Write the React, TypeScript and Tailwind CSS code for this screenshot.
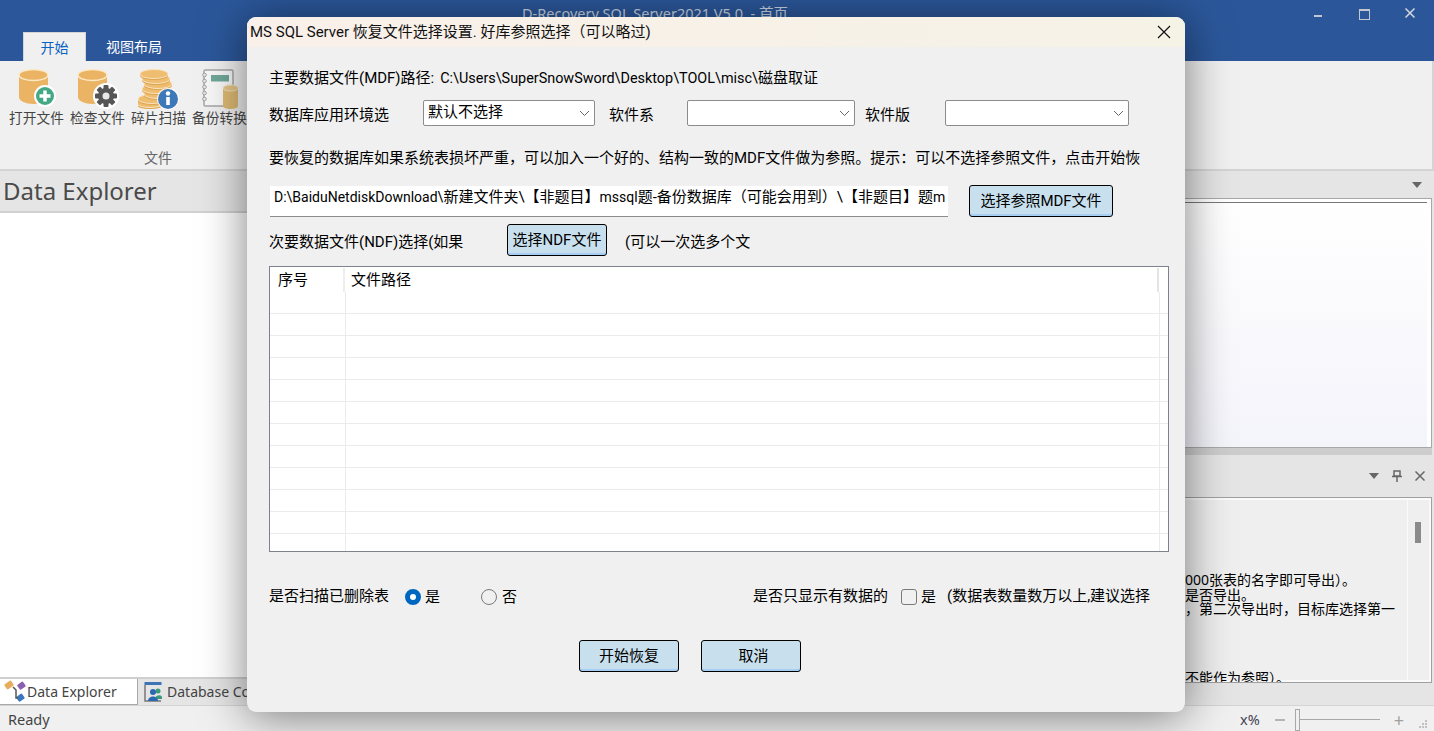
const CJK = "font-['Noto_Sans','Noto_Sans_CJK_SC',sans-serif]"

function Cylinder({ x = 0, y = 0 }: { x?: number; y?: number }) {
  return (
    <g transform={`translate(${x} ${y})`}>
      <path d="M0 6v22c0 4 6.500 7 14.500 7S29 32 29 28V6z" fill="#ebb464" />
      <ellipse cx="14.500" cy="6" rx="14.500" ry="5.500" fill="#ebb464" stroke="#fbe9c8" strokeWidth="1.500" />
    </g>
  )
}

function OpenFileIcon() {
  return (
    <svg width="40" height="40" viewBox="0 0 40 40" className="ml-[3px]">
      <Cylinder x={1} y={0} />
      <circle cx="27" cy="27" r="11" fill="#fff" />
      <circle cx="27" cy="27" r="9" fill="#45a884" />
      <path d="M27 21.500v11M21.500 27h11" stroke="#fff" strokeWidth="3.500" />
    </svg>
  )
}

function CheckFileIcon() {
  const teeth = [0, 45, 90, 135]
  return (
    <svg width="42" height="40" viewBox="0 0 42 40">
      <Cylinder x={1} y={0} />
      <circle cx="29" cy="27" r="13" fill="#fff" />
      {teeth.map((a) => (
        <rect key={a} x="26.500" y="16" width="5" height="22" rx="1" fill="#555" transform={`rotate(${a} 29 27)`} />
      ))}
      <circle cx="29" cy="27" r="8" fill="#555" />
      <circle cx="29" cy="27" r="3.500" fill="#e8e8e8" />
    </svg>
  )
}

function ScanIcon() {
  const coins = [
    [16, 5],
    [18, 10],
    [20, 15],
    [18, 20],
    [20, 25],
    [14, 30],
    [12, 34],
  ]
  return (
    <svg width="42" height="42" viewBox="0 0 42 42">
      {coins.slice().reverse().map(([cx, cy]) => (
        <g key={cy}>
          <ellipse cx={cx} cy={cy + 1.500} rx="14" ry="4.500" fill="#dda552" />
          <ellipse cx={cx} cy={cy} rx="14" ry="4.500" fill="#efbd70" stroke="#fae3bd" strokeWidth="1" />
        </g>
      ))}
      <circle cx="30" cy="30" r="11" fill="#fff" fillOpacity="0.8" />
      <circle cx="30" cy="30" r="10" fill="#3d78b8" />
      <rect x="28.200" y="28" width="3.600" height="8" fill="#fff" />
      <circle cx="30" cy="24.500" r="2.200" fill="#fff" />
    </svg>
  )
}

function BackupIcon() {
  return (
    <svg width="38" height="40" viewBox="0 0 38 40" className="ml-[3px]">
      <rect x="2" y="1" width="29" height="36" rx="1.500" fill="#f8f8f8" stroke="#a5a5a5" strokeWidth="1.500" />
      {[6, 12, 18, 24, 30].map((y) => (
        <circle key={y} cx="2.500" cy={y} r="1.800" fill="#ececec" stroke="#a0a0a0" />
      ))}
      <rect x="9" y="6" width="18" height="6.500" fill="#70a89a" />
      <path d="M21 19v18c0 2 3.500 3 7.500 3s7.500-1 7.500-3V19z" fill="#dfbb74" />
      <ellipse cx="28.500" cy="19" rx="7.500" ry="3" fill="#e5c588" stroke="#f4e4c4" />
    </svg>
  )
}

function RibbonButton({ label, children }: { label: string; children: React.ReactNode }) {
  return (
    <div className="flex w-[61px] flex-col items-center">
      <div className="flex h-[40px] items-start justify-center">{children}</div>
      <span className="-mt-[1px] text-[13.700px] leading-5 whitespace-nowrap text-[#444]">{label}</span>
    </div>
  )
}

function Chevron() {
  return (
    <svg width="11" height="7" viewBox="0 0 11 7" className="shrink-0">
      <path d="M1 1l4.500 4.500L10 1" fill="none" stroke="#666" strokeWidth="1" />
    </svg>
  )
}

function ComboBox({ width, value }: { width: string; value?: string }) {
  return (
    <div className={`flex h-[26px] items-center justify-between rounded-[2px] border border-[#8c8c8c] bg-white pr-[4px] pl-[4px] ${width}`}>
      <span className="-mt-[3px] text-[15px] leading-5 text-black">{value}</span>
      <Chevron />
    </div>
  )
}

function BlueButton({ width, label }: { width: string; label: string }) {
  return (
    <div className={`flex h-[32px] items-center justify-center rounded-[3px] border border-black bg-[#c8e0ee] text-[15px] text-black shadow-[inset_0_-2px_0_#a6cdf3] ${width}`}>
      {label}
    </div>
  )
}

function FileTable() {
  const rows = [22, 22, 22, 22, 22, 22, 22, 22, 22, 22, 22, 17]
  return (
    <div className="mt-[10px] h-[286px] w-[900px] border border-[#7e828d] bg-white">
      <div className="flex h-[25px] items-center">
        <div className="flex h-[24px] w-[75px] items-center border-r-2 border-[#eeeeee] pl-[8px] text-[15px] text-black">序号</div>
        <div className="flex h-[24px] w-[814px] items-center border-r-2 border-[#e4e4e4] pl-[6px] text-[15px] text-black">文件路径</div>
      </div>
      {rows.map((h, i) => (
        <div key={i} style={{ height: h }} className={`flex ${i < rows.length - 1 ? 'border-b border-[#ebebeb]' : ''}`}>
          <div className="w-[76px] border-r border-[#ebebeb]" />
          <div className="w-[814px] border-r border-[#ebebeb]" />
        </div>
      ))}
    </div>
  )
}

function Dialog() {
  return (
    <div className="absolute top-[17px] left-[247px] flex h-[695px] w-[938px] flex-col overflow-hidden rounded-[9px] bg-[#f0f0f0] font-['Roboto','Noto_Sans_CJK_SC',sans-serif] shadow-[0_4px_46px_rgba(0,0,0,0.5)]">
      <div className="flex h-[30px] shrink-0 items-center justify-between bg-gradient-to-r from-[#f9f0ea] to-[#f5f2e6] pr-[14px] pl-[3px]">
        <span className="text-[15px] text-[#111]">MS SQL Server 恢复文件选择设置. 好库参照选择（可以略过)</span>
        <svg width="14" height="14" viewBox="0 0 14 14">
          <path d="M1 1l12 12M13 1L1 13" stroke="#111" strokeWidth="1.200" />
        </svg>
      </div>
      <div className="flex flex-col pl-[22px] text-[15px] leading-5 text-black">
        <div className="mt-[21px] h-5 whitespace-nowrap">
          主要数据文件(MDF)路径:
          <span className="ml-[6px] text-[14.400px]">C:\Users\SuperSnowSword\Desktop\TOOL\misc\</span>
          磁盘取证
        </div>
        <div className="mt-[12px] flex items-center">
          <span className="mt-[4px] w-[154px]">数据库应用环境选</span>
          <ComboBox width="w-[172px]" value="默认不选择" />
          <span className="mt-[4px] ml-[14px] w-[78px]">软件系</span>
          <ComboBox width="w-[168px]" />
          <span className="mt-[4px] ml-[10px] w-[80px]">软件版</span>
          <ComboBox width="w-[184px]" />
        </div>
        <div className="mt-[22px] h-5 whitespace-nowrap">要恢复的数据库如果系统表损坏严重，可以加入一个好的、结构一致的MDF文件做为参照。提示：可以不选择参照文件，点击开始恢</div>
        <div className="mt-[17px] flex items-center">
          <div className="ml-[1px] h-[31px] w-[678px] overflow-hidden border-b border-[#8c8c8c] bg-white pt-[1px] pl-[4px] whitespace-nowrap">
            <span className="text-[14px]">D:\BaiduNetdiskDownload\</span>
            新建文件夹\【非题目】
            <span className="text-[14px]">mssql</span>
            题-备份数据库（可能会用到）\【非题目】题
            <span className="text-[14px]">m</span>
          </div>
          <BlueButton width="ml-[21px] w-[144px]" label="选择参照MDF文件" />
        </div>
        <div className="mt-[7px] flex items-center">
          <span className="mt-[3px] w-[238px]">次要数据文件(NDF)选择(如果</span>
          <BlueButton width="w-[100px]" label="选择NDF文件" />
          <span className="mt-[3px] ml-[18px]">(可以一次选多个文</span>
        </div>
        <FileTable />
        <div className="mt-[35px] flex h-5 items-center">
          <span className="-mt-[2px] w-[136px]">是否扫描已删除表</span>
          <span className="box-border h-[16px] w-[16px] rounded-full border-[5px] border-[#0067c0] bg-white" />
          <span className="ml-[4px] w-[56px]">是</span>
          <span className="box-border h-[16px] w-[16px] rounded-full border border-[#7a7a7a]" />
          <span className="ml-[5px] w-[251px]">否</span>
          <span className="-mt-[3px] w-[148px]">是否只显示有数据的</span>
          <span className="box-border h-[16px] w-[16px] rounded-[3px] border border-[#7a7a7a]" />
          <span className="ml-[4px] w-[26px]">是</span>
          <span className="-mt-[3px] whitespace-nowrap">(数据表数量数万以上,建议选择</span>
        </div>
        <div className="mt-[33px] ml-[310px] flex gap-[22px]">
          <BlueButton width="w-[100px]" label="开始恢复" />
          <BlueButton width="w-[100px] pl-[5px]" label="取消" />
        </div>
      </div>
    </div>
  )
}

function TitleBar() {
  return (
    <div className="relative flex h-[61px] shrink-0 flex-col bg-[#2b579a]">
      <div className="flex h-[32px] items-center justify-between">
        <span className="mb-[4px] ml-[522px] text-[14.500px] text-[#c9d4e4]">D-Recovery SQL Server2021 V5.0&nbsp; - 首页</span>
        <div className="flex items-center">
          <span className="mr-[37px] h-[2px] w-[8px] bg-[#c3c7cf]" />
          <span className="mr-[35px] mb-[3px] h-[11px] w-[11px] border border-t-2 border-[#c3c7cf]" />
          <svg width="10" height="10" viewBox="0 0 10 10" className="mr-[19px] mb-[7px]">
            <path d="M.5.500l9 9M9.500.500l-9 9" stroke="#d5d8de" strokeWidth="1.500" />
          </svg>
        </div>
      </div>
      <div className="flex h-[29px] items-end pl-[23px] text-[14px]">
        <div className="flex h-[29px] w-[63px] items-center justify-center border-x border-t border-[#d5d5d5] bg-[#f0f0f0] text-[#0a62c4]">开始</div>
        <div className="ml-[20px] flex h-[29px] w-[56px] items-center justify-center whitespace-nowrap text-white">视图布局</div>
      </div>
    </div>
  )
}

function Ribbon() {
  return (
    <div className="flex h-[110px] shrink-0 flex-col border-r-2 border-b-2 border-[#d4d4d4] bg-[#f0f0f0]">
      <div className="flex pt-[8px] pl-[6px]">
        <RibbonButton label="打开文件"><OpenFileIcon /></RibbonButton>
        <RibbonButton label="检查文件"><CheckFileIcon /></RibbonButton>
        <RibbonButton label="碎片扫描"><ScanIcon /></RibbonButton>
        <RibbonButton label="备份转换"><BackupIcon /></RibbonButton>
      </div>
      <span className="mt-[20px] ml-[144px] text-[14px] leading-5 text-[#666]">文件</span>
    </div>
  )
}

function LeftPanel() {
  return (
    <div className="flex w-[700px] shrink-0 flex-col bg-[#e5e5e5]">
      <div className="flex h-[42px] shrink-0 items-center border-b-2 border-[#d0d0d0] pl-[3px] text-[24px] text-[#4a4a4a]">Data Explorer</div>
      <div className="flex-1 bg-white" />
      <div className="flex h-[28px] shrink-0 items-start border-t-2 border-[#d0d0d0] text-[14px] text-[#444]">
        <div className="flex h-[26px] w-[138px] items-center border-r border-b border-[#a8a8a8] bg-white pb-[1px] pl-[4px]">
          <svg width="24" height="24" viewBox="0 0 24 24">
            <rect x="1" y="3" width="8" height="6" rx="1" fill="#e8ad5c" transform="rotate(-35 5 6)" />
            <rect x="14" y="4" width="7" height="6" rx="1" fill="#8d5fb0" transform="rotate(-35 17 7)" />
            <rect x="13" y="16" width="7" height="6" rx="1" fill="#3c78c0" transform="rotate(-35 16 19)" />
            <path d="M9 8l3 3v8h2" fill="none" stroke="#555" strokeWidth="1.500" />
          </svg>
          <span className="ml-[-1px]">Data Explorer</span>
        </div>
        <div className="flex h-[26px] items-center pb-[1px] pl-[6px] whitespace-nowrap">
          <svg width="20" height="22" viewBox="0 0 20 22">
            <path d="M1 4v16h16" fill="none" stroke="#777" strokeWidth="1.500" />
            <rect x="0.500" y="1" width="17" height="3" fill="#3c74b4" />
            <circle cx="14" cy="10" r="2.500" fill="#3b9a78" />
            <path d="M11 18c0-4 6-5 7-2v2z" fill="#3b9a78" />
            <circle cx="9" cy="11" r="3" fill="#2a68b0" />
            <path d="M4 20c0-6 10-6 10 0z" fill="#2a68b0" />
          </svg>
          <span className="ml-[3px]">Database Console</span>
        </div>
      </div>
    </div>
  )
}

function RightPanel() {
  return (
    <div className="flex flex-1 flex-col border-r-2 border-[#e5e5e5] bg-[#e5e5e5]">
      <div className="flex h-[27px] shrink-0 items-center justify-end pr-[10px]">
        <span className="h-0 w-0 border-x-[5px] border-t-[6px] border-x-transparent border-t-[#666]" />
      </div>
      <div className="flex h-[250px] shrink-0 flex-col border border-[#a8a8a8] bg-white px-[4px] pt-[3px]">
        <div className="h-[1px] w-full bg-[#777]" />
        <div className="flex-1 bg-gradient-to-b from-white to-[#f4f4fb]" />
      </div>
      <div className="h-[7px] shrink-0 bg-[#cdcdcd]" />
      <div className="flex h-[42px] shrink-0 items-center justify-end gap-[12px] pr-[7px]">
        <span className="h-0 w-0 border-x-[5px] border-t-[6px] border-x-transparent border-t-[#666]" />
        <svg width="12" height="12" viewBox="0 0 12 12">
          <path d="M3 1h6v5H3zM1 6.500h10M6 7v5" fill="none" stroke="#666" strokeWidth="1.500" />
        </svg>
        <svg width="10" height="10" viewBox="0 0 10 10">
          <path d="M.5.500l9 9M9.500.500l-9 9" stroke="#666" strokeWidth="1.500" />
        </svg>
      </div>
      <div className="flex h-[186px] shrink-0 overflow-hidden border border-[#a0a0a0] bg-[#efefef] shadow-[inset_0_0_0_2px_#fafafa]">
        <div className="flex-1 overflow-hidden pt-[75px] pl-[477px] text-[14px] leading-[14.500px] whitespace-nowrap text-black">
          <div className="pl-[7px]">000张表的名字即可导出）。</div>
          <div className="pl-[7px]">是否导出。</div>
          <div className="pl-[7px]">，第二次导出时，目标库选择第一</div>
          <div className="mt-[54px] pl-[7px]">不能作为参照）。</div>
        </div>
        <div className="flex w-[24px] shrink-0 justify-start border-l border-[#fafafa] pt-[24px] pl-[7px]">
          <span className="h-[21px] w-[6px] bg-[#8a8a8a]" />
        </div>
      </div>
      <div className="flex-1" />
    </div>
  )
}

function StatusBar() {
  return (
    <div className="flex h-[26px] shrink-0 items-center justify-between border-t border-[#d4d4d4] bg-[#f0f0f0] pt-[2px] pl-[8px] text-[14.500px] text-[#444]">
      <span>Ready</span>
      <div className="flex items-center">
        <span className="text-[#445]">x%</span>
        <span className="ml-[15px] h-[2px] w-[10px] bg-[#b5b5b5]" />
        <span className="ml-[10px] h-[22px] w-[5px] border border-[#a8a8a8] bg-[#f0f0f0]" />
        <span className="h-[1px] w-[80px] bg-[#a8a8a8]" />
        <span className="ml-[14px] text-[18px] leading-none text-[#a0a0a0]">+</span>
        <svg width="10" height="10" viewBox="0 0 10 10" className="mt-[8px] mr-[6px] ml-[14px]">
          <path d="M7 1h2v2H7zM4 4h2v2H4zM7 4h2v2H7zM1 7h2v2H1zM4 7h2v2H4zM7 7h2v2H7z" fill="#c0c0c0" />
        </svg>
      </div>
    </div>
  )
}

export default function App() {
  return (
    <div className={`relative flex h-[731px] w-[1434px] flex-col overflow-hidden bg-[#f0f0f0] ${CJK}`}>
      <TitleBar />
      <Ribbon />
      <div className="flex flex-1 overflow-hidden">
        <LeftPanel />
        <RightPanel />
      </div>
      <StatusBar />
      <Dialog />
    </div>
  )
}
